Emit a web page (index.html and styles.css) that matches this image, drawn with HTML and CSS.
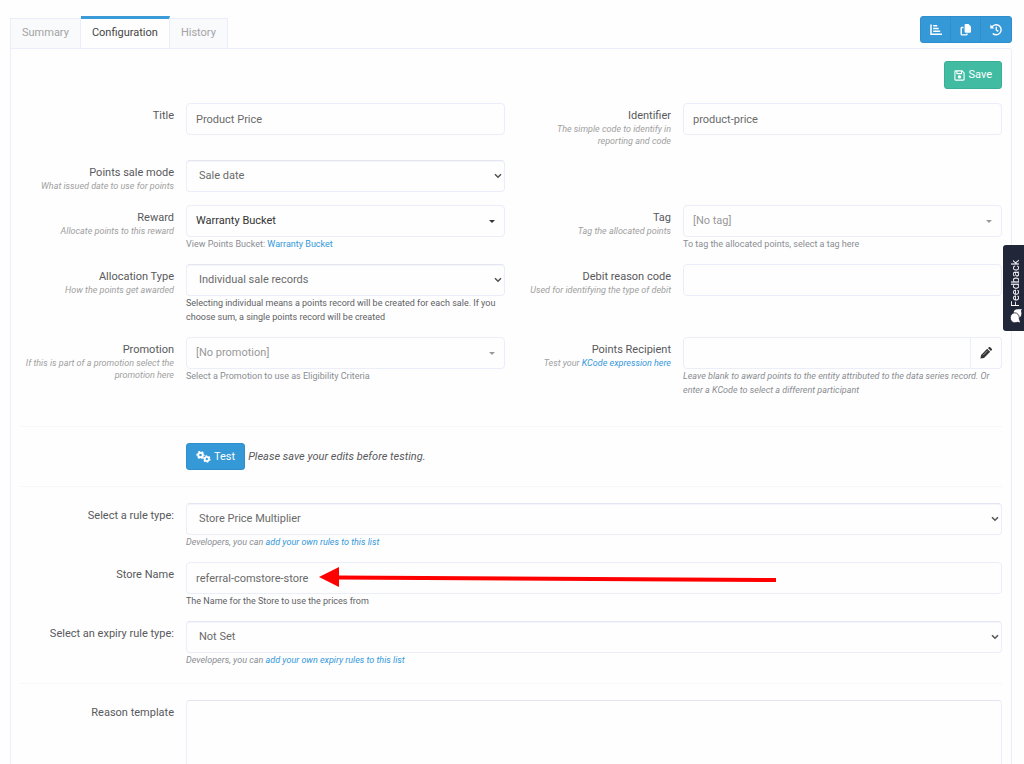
FILE: index.html
```html
<!DOCTYPE html>
<html lang="en">
<head>
<meta charset="utf-8">
<meta name="viewport" content="width=device-width, initial-scale=1">
<title>Product Price - Configuration</title>
<link rel="stylesheet" href="styles.css">
</head>
<body>
<main class="page">
  <header class="topbar">
    <nav class="tabs">
      <a class="tab" href="#summary">Summary</a>
      <a class="tab tab-active" href="#configuration" aria-current="page">Configuration</a>
      <a class="tab" href="#history">History</a>
    </nav>
    <div class="btn-group">
      <button class="btn btn-blue" type="button" aria-label="Report">
        <svg class="icon" viewBox="0 0 12 12" fill="none" stroke="currentColor" stroke-width="1.5"><path d="M1 .5v9.700h11M3.200 1.700h4M3.200 4.400h5.500M3.200 7.200h7"/></svg>
      </button>
      <button class="btn btn-blue" type="button" aria-label="Copy">
        <svg class="icon" viewBox="0 0 12 12"><path fill="currentColor" d="M5.500 0h3L11 2.500v5.300a.9.900 0 0 1-.9.900H5.500a.9.900 0 0 1-.9-.900V.900a.9.900 0 0 1 .9-.900z"/><path fill="none" stroke="currentColor" stroke-width="1.400" d="M3.500 3.500H1.900a.7.700 0 0 0-.7.700v6a.7.700 0 0 0 .7.700h4.400a.7.700 0 0 0 .7-.700V9.500"/></svg>
      </button>
      <button class="btn btn-blue" type="button" aria-label="History">
        <svg class="icon" viewBox="0 0 12 12" fill="none" stroke="currentColor" stroke-width="1.400"><path d="M1.800 3.200A5 5 0 1 1 2.700 9.400M6.300 2.700V6l2 1.400"/><path fill="currentColor" stroke="none" d="M.3.600v4h4z"/></svg>
      </button>
    </div>
  </header>

  <form class="panel">
    <div class="actions">
      <button class="btn btn-green" type="button">
        <svg class="icon icon-save" viewBox="0 0 12 12" fill="none" stroke="currentColor" stroke-width="1.200"><path d="M1.600 1h7.200L11 3.200v7.200a.6.6 0 0 1-.6.600H1.600a.6.6 0 0 1-.6-.600V1.600a.6.6 0 0 1 .6-.600zM3.200 1v3h5V1"/><circle cx="6" cy="7.500" r="1.300" fill="currentColor"/></svg>
        Save
      </button>
    </div>

    <section class="fields fields-main">
      <div class="caption"><label for="title">Title</label></div>
      <div class="field"><input class="control" id="title" type="text" value="Product Price"></div>
      <div class="caption"><label for="identifier">Identifier</label><small>The simple code to identify in reporting and code</small></div>
      <div class="field"><input class="control" id="identifier" type="text" value="product-price"></div>

      <div class="caption"><label for="mode">Points sale mode</label><small>What issued date to use for points</small></div>
      <div class="field">
        <div class="picker">
          <select class="control select" id="mode"><option>Sale date</option></select>
          <svg class="chevron" viewBox="0 0 8 6"><path d="M1 1.200l3 3 3-3"/></svg>
        </div>
      </div>

      <div class="caption row-start"><label for="reward">Reward</label><small>Allocate points to this reward</small></div>
      <div class="field">
        <div class="picker">
          <select class="control lookup lookup-set" id="reward"><option>Warranty Bucket</option></select>
          <svg class="caret caret-dark" viewBox="0 0 6 3"><path d="M0 0h6L3 3z"/></svg>
        </div>
        <p class="help">View Points Bucket: <a href="#bucket">Warranty Bucket</a></p>
      </div>
      <div class="caption"><label for="tag">Tag</label><small>Tag the allocated points</small></div>
      <div class="field">
        <div class="picker">
          <select class="control lookup" id="tag"><option>[No tag]</option></select>
          <svg class="caret" viewBox="0 0 6 3"><path d="M0 0h6L3 3z"/></svg>
        </div>
        <p class="help">To tag the allocated points, select a tag here</p>
      </div>

      <div class="caption"><label for="allocation">Allocation Type</label><small>How the points get awarded</small></div>
      <div class="field">
        <div class="picker">
          <select class="control select" id="allocation"><option>Individual sale records</option></select>
          <svg class="chevron" viewBox="0 0 8 6"><path d="M1 1.200l3 3 3-3"/></svg>
        </div>
        <p class="help help-dark">Selecting individual means a points record will be created for each sale. If you choose sum, a single points record will be created</p>
      </div>
      <div class="caption"><label for="debit">Debit reason code</label><small>Used for identifying the type of debit</small></div>
      <div class="field"><input class="control" id="debit" type="text"></div>

      <div class="caption"><label for="promotion">Promotion</label><small>If this is part of a promotion select the promotion here</small></div>
      <div class="field">
        <div class="picker">
          <select class="control lookup" id="promotion"><option>[No promotion]</option></select>
          <svg class="caret" viewBox="0 0 6 3"><path d="M0 0h6L3 3z"/></svg>
        </div>
        <p class="help">Select a Promotion to use as Eligibility Criteria</p>
      </div>
      <div class="caption"><label for="recipient">Points Recipient</label><small>Test your <a href="#kcode">KCode expression here</a></small></div>
      <div class="field">
        <div class="input-group">
          <input class="control" id="recipient" type="text">
          <button class="addon" type="button" aria-label="Edit recipient">
            <svg class="icon" viewBox="0 0 12 12"><path fill="currentColor" d="M7.200 1.800l3 3-6.200 6.100-3.600.700.700-3.600zM8 1.100l.8-.8a1 1 0 0 1 1.400 0l1.500 1.500a1 1 0 0 1 0 1.400l-.8.800z"/><path stroke="#fefefe" stroke-width=".5" d="M3 8.300l4.600-4.600"/></svg>
          </button>
        </div>
        <p class="help help-em">Leave blank to award points to the entity attributed to the data series record. Or enter a KCode to select a different participant</p>
      </div>
    </section>

    <hr class="rule">

    <section class="fields fields-wide">
      <div class="field field-test">
        <button class="btn btn-blue btn-test" type="button">
          <svg class="icon icon-cogs" viewBox="0 0 15 12" fill="none" stroke="currentColor"><circle cx="4.500" cy="4" r="2.300" stroke-width="2"/><circle cx="4.500" cy="4" r="3.500" stroke-width="1.200" stroke-dasharray="1.900 1.765" stroke-dashoffset=".95"/><circle cx="10.800" cy="8" r="2.100" stroke-width="1.900"/><circle cx="10.800" cy="8" r="3.200" stroke-width="1.200" stroke-dasharray="1.700 1.650"/></svg>
          Test
        </button>
        <em>Please save your edits before testing.</em>
      </div>
    </section>

    <hr class="rule">

    <section class="fields fields-wide">
      <div class="caption"><label for="rule">Select a rule type:</label></div>
      <div class="field">
        <div class="picker">
          <select class="control select" id="rule"><option>Store Price Multiplier</option></select>
          <svg class="chevron" viewBox="0 0 8 6"><path d="M1 1.200l3 3 3-3"/></svg>
        </div>
        <p class="help help-em">Developers, you can <a href="#rules">add your own rules to this list</a></p>
      </div>

      <div class="caption"><label for="store">Store Name</label></div>
      <div class="field">
        <div class="picker">
          <input class="control" id="store" type="text" value="referral-comstore-store">
          <svg class="pointer" viewBox="0 0 458 20" aria-hidden="true"><path d="M18 10.500L457 13" stroke="#f00" stroke-width="4"/><path d="M0 10L20 0v20z" fill="#f00"/></svg>
        </div>
        <p class="help help-dark">The Name for the Store to use the prices from</p>
      </div>

      <div class="caption"><label for="expiry">Select an expiry rule type:</label></div>
      <div class="field">
        <div class="picker">
          <select class="control select" id="expiry"><option>Not Set</option></select>
          <svg class="chevron" viewBox="0 0 8 6"><path d="M1 1.200l3 3 3-3"/></svg>
        </div>
        <p class="help help-em">Developers, you can <a href="#expiry-rules">add your own expiry rules to this list</a></p>
      </div>
    </section>

    <hr class="rule">

    <section class="fields fields-wide">
      <div class="caption"><label for="reason">Reason template</label></div>
      <div class="field"><textarea class="control area" id="reason"></textarea></div>
    </section>
  </form>
</main>

<button class="feedback" type="button">
  <svg class="icon-chat" viewBox="0 0 14 12"><ellipse cx="9.500" cy="7.500" rx="4.300" ry="3.900" fill="#fff"/><path d="M11 10l3 2-.6-4z" fill="#fff"/><ellipse cx="5.200" cy="4.800" rx="5" ry="4.500" fill="#fff" stroke="#222639" stroke-width=".8"/><path d="M1.500 6.500L.4 10l4-1.200z" fill="#fff"/></svg>
  <span>Feedback</span>
</button>
</body>
</html>
```

FILE: styles.css
```css
* { box-sizing: border-box; }

body {
  margin: 0;
  background: #fefefe;
  color: #58595c;
  font: 11px/14px Roboto, "Liberation Sans", sans-serif;
}

button, input, select, textarea { font: inherit; color: inherit; margin: 0; }
a { color: #3498db; text-decoration: none; }

.page {
  display: flex;
  flex-direction: column;
  height: 100vh;
  overflow: hidden;
  padding: 16px 12px 0 10px;
}

.topbar {
  display: flex;
  justify-content: space-between;
  align-items: flex-start;
}

.tabs { display: flex; align-items: flex-end; height: 33px; margin-bottom: -1px; }
.tab {
  height: 31px;
  padding: 7px 11px 0;
  border: 1px solid #ebeef8;
  border-left-width: 0;
  background: #f9fafc;
  color: #a3a3a3;
}
.tab:first-child { border-left-width: 1px; }
.tab-active {
  height: 33px;
  border-top: 3px solid #3b9ad8;
  border-bottom-color: #fefefe;
  background: #fefefe;
  color: #454545;
}

.btn {
  display: inline-flex;
  align-items: center;
  justify-content: center;
  gap: 3px;
  height: 27px;
  padding: 0 9px;
  border: 1px solid transparent;
  border-radius: 3px;
  color: #fff;
  font-size: 11px;
}
.btn-blue { background: #3598d7; border-color: #2f8fcd; }
.btn-green { height: 28px; background: #42bba3; border-color: #39b096; }
.btn-group { display: flex; }
.btn-group .btn { width: 32px; padding: 0; border-radius: 0; }
.btn-group .btn + .btn { margin-left: -2px; }
.btn-group .btn:first-child { border-radius: 3px 0 0 3px; }
.btn-group .btn:last-child { border-radius: 0 3px 3px 0; }

.icon { width: 12px; height: 12px; flex: none; }
.icon-save { width: 11px; height: 11px; }
.icon-cogs { width: 15px; height: 12px; }

.panel {
  flex: 1;
  padding: 12px 9px 0;
  border: 1px solid #ebeef8;
  border-radius: 0 3px 0 0;
}
.actions { display: flex; justify-content: flex-end; margin-bottom: 14px; }

.fields { display: grid; column-gap: 12px; row-gap: 13px; align-items: start; }
.fields-main {
  grid-template-columns: minmax(0, 154fr) minmax(0, 319fr) minmax(0, 154fr) minmax(0, 319fr);
  padding-bottom: 13px;
}
.fields-wide { grid-template-columns: minmax(0, 154fr) minmax(0, 816fr); }
.row-start { grid-column: 1; }

.caption { padding: 6px 0 0 4px; text-align: right; }
.caption label { display: block; }
.caption small {
  display: block;
  color: #a0a0a0;
  font-size: 9px;
  line-height: 12px;
  font-style: italic;
}

.control {
  display: block;
  width: 100%;
  height: 32px;
  padding: 0 9px;
  border: 1px solid #ebeef8;
  border-radius: 4px;
  background: #fefefe;
  color: #6a6a6a;
  font-size: 11px;
  outline: none;
  appearance: none;
}
.picker { position: relative; }
.select { padding-left: 12px; box-shadow: inset 0 1px 0 #f5f6fb; }
.lookup { color: #999; }
.lookup-set { color: #333; }
.select, .area { border-top-color: #e3e5f0; }
.area { height: 120px; resize: none; }

.chevron {
  position: absolute;
  right: 3px;
  top: 13px;
  width: 8px;
  height: 6px;
  fill: none;
  stroke: #555;
  stroke-width: 1.6;
  pointer-events: none;
}
.caret {
  position: absolute;
  right: 10px;
  top: 15px;
  width: 6px;
  height: 3px;
  fill: #999;
  pointer-events: none;
}
.caret-dark { fill: #333; }

.pointer {
  position: absolute;
  left: 133px;
  top: 5px;
  width: 458px;
  height: 20px;
  pointer-events: none;
}

.input-group { display: flex; }
.input-group .control { flex: 1; min-width: 0; border-radius: 4px 0 0 4px; }
.addon {
  display: flex;
  align-items: center;
  justify-content: center;
  width: 31px;
  height: 32px;
  padding: 0;
  border: 1px solid #ebeef8;
  border-left: 0;
  border-radius: 0 4px 4px 0;
  background: #fefefe;
  color: #333;
}

.help { margin: 0; color: #8a8d92; font-size: 9px; line-height: 14px; }
.help-dark { color: #606164; }
.help-em { font-style: italic; }

.rule { height: 1px; margin: 16px 0; border: 0; background: #f7f7f9; }

.field-test { grid-column: 2; display: flex; align-items: center; gap: 3px; }

.feedback {
  position: fixed;
  right: 0;
  top: 245px;
  display: flex;
  align-items: center;
  gap: 3px;
  width: 21px;
  height: 86px;
  padding: 9px 6px 9px 0;
  border: 0;
  border-radius: 0 3px 3px 0;
  background: #222639;
  color: #fff;
  font-size: 11px;
  writing-mode: vertical-rl;
  transform: rotate(180deg);
}
.icon-chat { width: 14px; height: 12px; flex: none; transform: rotate(90deg); }
```
